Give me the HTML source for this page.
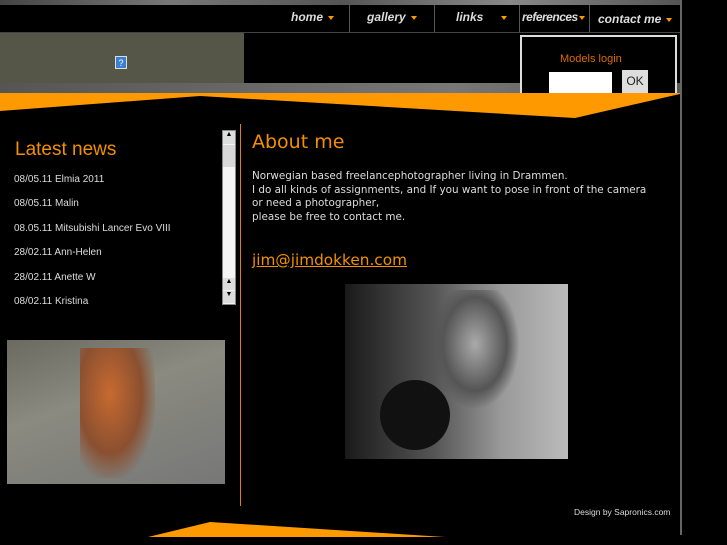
<!DOCTYPE html>
<html><head><style>
body{margin:0;width:727px;height:545px;background:#000;position:relative;overflow:hidden;font-family:"Liberation Sans",sans-serif}
.a{position:absolute}
.nav{font-style:italic;font-weight:bold;color:#ddd;font-size:12px;top:10px}
.tri{display:inline-block;width:0;height:0;border-left:3px solid transparent;border-right:3px solid transparent;border-top:4px solid #f90;margin-left:5px;vertical-align:middle}
.sep{top:5px;width:1px;height:27px;background:#555}
.news{left:14px;font-size:10px;color:#ddd}
.dv{font-family:"DejaVu Sans",sans-serif}
</style></head><body>
<div class="a" style="left:0;top:0;width:680px;height:5px;background:linear-gradient(90deg,#444,#777,#555,#888,#555)"></div>
<div class="a" style="left:0;top:5px;width:680px;height:27px;background:#000;border-bottom:1px solid #444"></div>
<div class="a nav" style="left:291px">home<span class="tri"></span></div>
<div class="a sep" style="left:349px"></div>
<div class="a nav" style="left:367px">gallery<span class="tri"></span></div>
<div class="a sep" style="left:434px"></div>
<div class="a nav" style="left:456px">links<span class="tri" style="margin-left:18px"></span></div>
<div class="a sep" style="left:519px"></div>
<div class="a nav" style="left:522px;top:10px;letter-spacing:-0.5px">references<span class="tri" style="margin-left:1px"></span></div>
<div class="a sep" style="left:589px"></div>
<div class="a nav" style="left:598px;top:12px">contact me<span class="tri"></span></div>
<div class="a" style="left:0;top:33px;width:244px;height:50px;background:#555548"></div>
<div class="a" style="left:0;top:83px;width:680px;height:10px;background:linear-gradient(90deg,#555,#666,#777,#555)"></div>
<div class="a" style="left:115px;top:56px;width:12px;height:13px;background:#3a7fd0;border:1px solid #ddd;color:#fff;font-size:9px;text-align:center;line-height:13px;box-sizing:border-box">?</div>
<div class="a" style="left:520px;top:35px;width:157px;height:58px;border:2px solid #ddd;border-bottom:none;background:#000;box-sizing:border-box"></div>
<div class="a" style="left:560px;top:53px;color:#e06a00;font-size:11px">Models login</div>
<div class="a" style="left:549px;top:72px;width:63px;height:21px;background:#fff"></div>
<div class="a" style="left:622px;top:70px;width:26px;height:23px;background:#ddd;font-size:12px;text-align:center;line-height:22px;color:#222">OK</div>
<svg class="a" style="left:0;top:0" width="727" height="545">
<polygon points="0,93 680,93 680,94 575,118 200,96 0,111" fill="#f90"/>
<polygon points="148,537 210,522 445,537" fill="#f90"/>
<rect x="680" y="0" width="2" height="535" fill="#666"/>
<rect x="240" y="124" width="1" height="382" fill="#e08000"/>
</svg>
<div class="a" style="left:15px;top:139px;color:#f39000;font-size:19px">Latest news</div>
<div class="a news" style="top:174px">08/05.11 Elmia 2011</div>
<div class="a news" style="top:198px">08/05.11 Malin</div>
<div class="a news" style="top:223px">08.05.11 Mitsubishi Lancer Evo VIII</div>
<div class="a news" style="top:247px">28/02.11 Ann-Helen</div>
<div class="a news" style="top:272px">28/02.11 Anette W</div>
<div class="a news" style="top:296px">08/02.11 Kristina</div>
<div class="a" style="left:222px;top:130px;width:14px;height:175px;background:#f4f4f4;border:1px solid #888;box-sizing:border-box"></div>
<div class="a" style="left:223px;top:131px;width:12px;height:13px;background:#ddd;font-size:7px;text-align:center">▲</div>
<div class="a" style="left:223px;top:145px;width:12px;height:22px;background:#d8d8d8"></div>
<div class="a" style="left:223px;top:278px;width:12px;height:12px;background:#ddd;font-size:7px;text-align:center">▲</div>
<div class="a" style="left:223px;top:291px;width:12px;height:12px;background:#ddd;font-size:7px;text-align:center">▼</div>
<div class="a" style="left:7px;top:340px;width:218px;height:144px;background:linear-gradient(160deg,#6a6a60,#8a8a80 40%,#777 100%)"></div>
<div class="a" style="left:80px;top:348px;width:75px;height:130px;background:radial-gradient(ellipse at 40% 35%,#c86a30,#8a5030 50%,transparent 75%)"></div>
<div class="a dv" style="left:252px;top:131px;color:#f39000;font-size:19px">About me</div>
<div class="a dv" style="left:252px;top:170px;color:#ddd;font-size:10.4px;line-height:13.7px">Norwegian based freelancephotographer living in Drammen.<br>I do all kinds of assignments, and If you want to pose in front of the camera<br>or need a photographer,<br>please be free to contact me.</div>
<div class="a dv" style="left:252px;top:251px;color:#f39000;font-size:15.3px;text-decoration:underline">jim@jimdokken.com</div>
<div class="a" style="left:345px;top:284px;width:223px;height:175px;background:linear-gradient(90deg,#1a1a1a,#555 40%,#999 70%,#bbb)"></div>
<div class="a" style="left:430px;top:290px;width:90px;height:120px;background:radial-gradient(ellipse at 50% 45%,#aaa,#555 50%,transparent 70%)"></div>
<div class="a" style="left:380px;top:380px;width:70px;height:70px;border-radius:50%;background:#111"></div>
<div class="a" style="left:574px;top:507px;color:#ddd;font-size:8.5px">Design by Sapronics.com</div>
</body></html>
